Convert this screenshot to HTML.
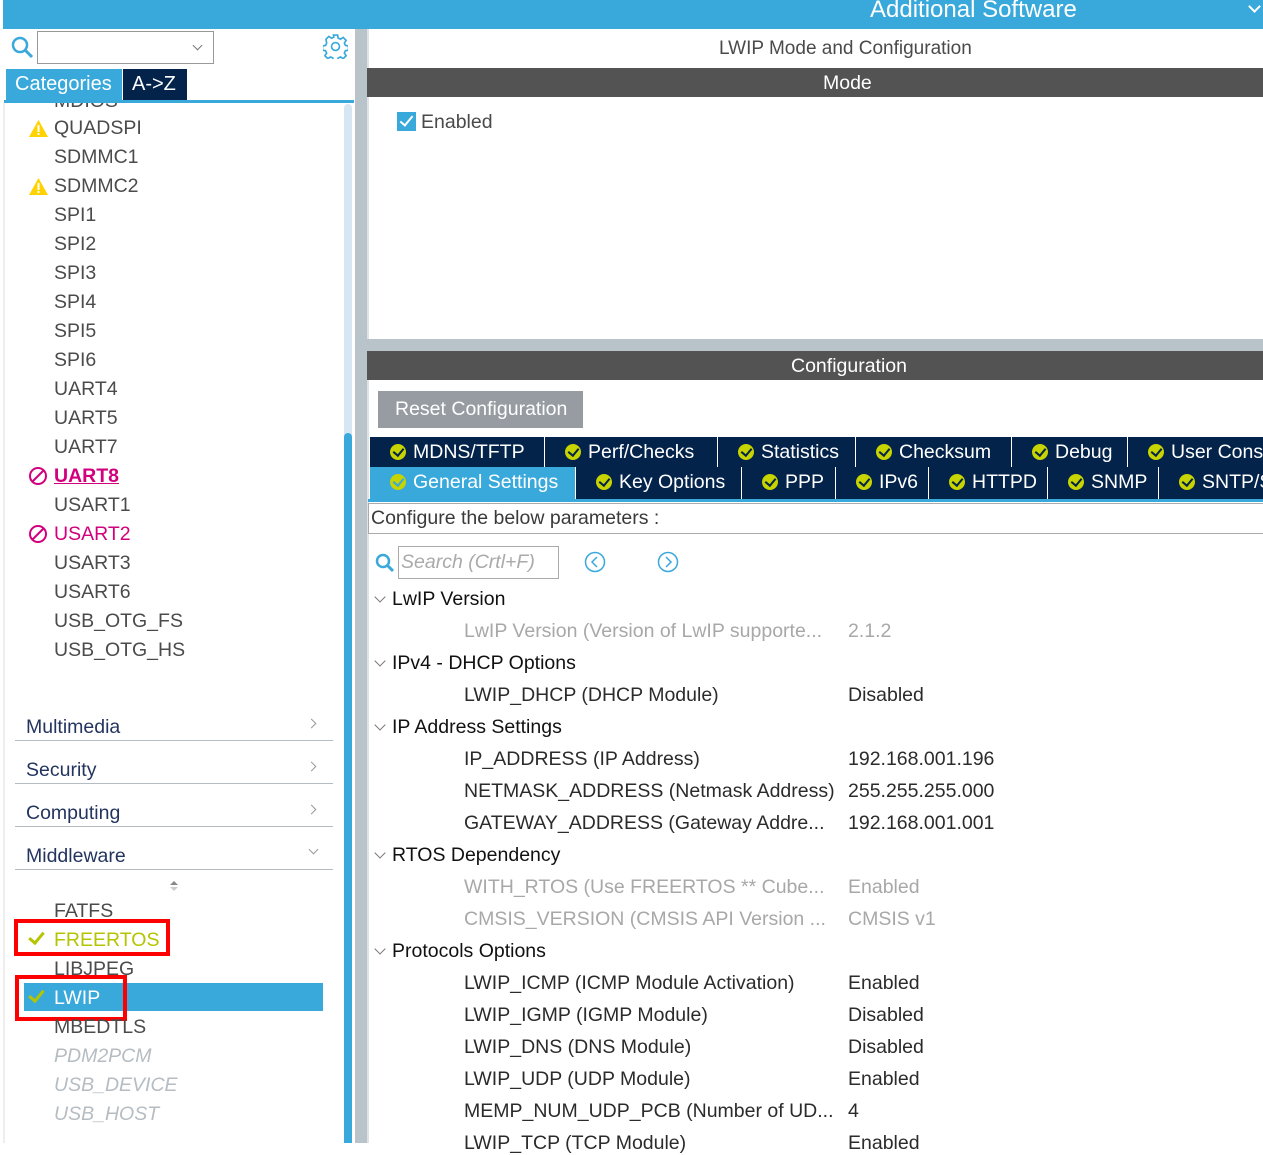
<!DOCTYPE html>
<html><head><meta charset="utf-8"><style>
*{margin:0;padding:0;box-sizing:border-box}
body{width:1263px;height:1143px;position:relative;overflow:hidden;background:#fff;font-family:"Liberation Sans",sans-serif;color:#4a4a4a}
.a{position:absolute}
.t{position:absolute;line-height:24px;font-size:19.5px;white-space:nowrap}
.li{color:#4b4b4b}
.dim{color:#b5bcc2;font-style:italic}
.mn{color:#23345f}
.ln{position:absolute;left:15px;width:318px;height:1px;background:#b5bcc2}
.tab{position:absolute;height:30px;background:#03234b;color:#fff;font-size:19.5px;line-height:30px;padding-left:20px;border-right:1px solid #fff;white-space:nowrap;overflow:hidden}
.tab i{display:inline-block;width:16px;height:16px;border-radius:50%;background:#c8d400;vertical-align:-2px;margin-right:7px;position:relative}
.tab i:after{content:"";position:absolute;left:5px;top:2px;width:5px;height:8px;border:solid #03234b;border-width:0 2px 2px 0;transform:rotate(40deg)}
.tab.on i:after{border-color:#39a9dc}
.h{color:#111}
.k{color:#2b2b2b}
.g{color:#a8a8a8}
.arr{position:absolute;left:376px;width:8px;height:8px;border:solid #777;border-width:0 1px 1px 0;transform:rotate(45deg)}
</style></head><body>
<div class="a" style="left:3px;top:0;width:1260px;height:29px;background:#39a9dc"></div>
<div class="t" style="left:870px;top:-3px;font-size:24px;color:#fff;line-height:26px">Additional Software</div>
<div class="a" style="left:1250px;top:2px;width:9px;height:9px;border:solid #fff;border-width:0 2px 2px 0;transform:rotate(45deg)"></div>

<svg class="a" style="left:10px;top:35px" width="24" height="24" viewBox="0 0 24 24"><circle cx="10" cy="10" r="7" fill="none" stroke="#39a9dc" stroke-width="2.5"/><line x1="15" y1="15" x2="22" y2="22" stroke="#39a9dc" stroke-width="3"/></svg>
<div class="a" style="left:37px;top:31px;width:177px;height:33px;border:1px solid #999"></div>
<div class="a" style="left:194px;top:42px;width:7px;height:7px;border:solid #777;border-width:0 1px 1px 0;transform:rotate(45deg)"></div>
<svg class="a" style="left:323px;top:34px" width="25" height="25" viewBox="0 0 24 24"><path d="M10 1h4l.6 3 2.2 1 2.6-1.7 2.8 2.8-1.7 2.6 1 2.2 3 .6v4l-3 .6-1 2.2 1.7 2.6-2.8 2.8-2.6-1.7-2.2 1-.6 3h-4l-.6-3-2.2-1-2.6 1.7-2.8-2.8 1.7-2.6-1-2.2-3-.6v-4l3-.6 1-2.2L2.8 5.1l2.8-2.8 2.6 1.7 2.2-1z" fill="none" stroke="#39a9dc" stroke-width="1.6"/><circle cx="12" cy="12" r="3.8" fill="none" stroke="#39a9dc" stroke-width="1.6"/></svg>
<div class="a" style="left:6px;top:69px;width:116px;height:31px;background:#39a9dc;color:#fff;font-size:20px;line-height:31px;padding-left:9px">Categories</div>
<div class="a" style="left:123px;top:69px;width:64px;height:31px;background:#03234b;color:#fff;font-size:20px;line-height:31px;padding-left:9px">A-&gt;Z</div>
<div class="a" style="left:4px;top:100px;width:350px;height:3px;background:#39a9dc"></div>
<div class="a" style="left:3px;top:103px;width:2px;height:1040px;background:#eee"></div>
<div class="a" style="left:344px;top:104px;width:8px;height:1039px;background:#d6e6f3;border-radius:4px 4px 0 0"></div>
<div class="a" style="left:344px;top:433px;width:8px;height:710px;background:#39a9dc;border-radius:4px 4px 0 0"></div>
<div class="a" style="left:355px;top:29px;width:12px;height:1114px;background:#b9c4ca"></div>

<div class="a" style="left:0;top:103px;width:340px;height:8px;overflow:hidden"><div class="t li" style="left:54px;top:-14px">MDIOS</div></div>
<svg class="a" style="left:28px;top:119px" width="21" height="19" viewBox="0 0 21 19"><path d="M10.5 1L20 18H1z" fill="#ffd200"/><rect x="9.5" y="6" width="2" height="7" fill="#fff"/><rect x="9.5" y="14" width="2" height="2" fill="#fff"/></svg>
<div class="t li" style="left:54px;top:116px">QUADSPI</div>
<div class="t li" style="left:54px;top:145px">SDMMC1</div>
<svg class="a" style="left:28px;top:177px" width="21" height="19" viewBox="0 0 21 19"><path d="M10.5 1L20 18H1z" fill="#ffd200"/><rect x="9.5" y="6" width="2" height="7" fill="#fff"/><rect x="9.5" y="14" width="2" height="2" fill="#fff"/></svg>
<div class="t li" style="left:54px;top:174px">SDMMC2</div>
<div class="t li" style="left:54px;top:203px">SPI1</div>
<div class="t li" style="left:54px;top:232px">SPI2</div>
<div class="t li" style="left:54px;top:261px">SPI3</div>
<div class="t li" style="left:54px;top:290px">SPI4</div>
<div class="t li" style="left:54px;top:319px">SPI5</div>
<div class="t li" style="left:54px;top:348px">SPI6</div>
<div class="t li" style="left:54px;top:377px">UART4</div>
<div class="t li" style="left:54px;top:406px">UART5</div>
<div class="t li" style="left:54px;top:435px">UART7</div>
<svg class="a" style="left:28px;top:466px" width="20" height="20" viewBox="0 0 20 20"><circle cx="10" cy="10" r="8" fill="none" stroke="#d2007c" stroke-width="2"/><line x1="4.5" y1="15.5" x2="15.5" y2="4.5" stroke="#d2007c" stroke-width="2"/></svg>
<div class="t" style="left:54px;top:464px;color:#d2007c;font-weight:bold;text-decoration:underline">UART8</div>
<div class="t li" style="left:54px;top:493px">USART1</div>
<svg class="a" style="left:28px;top:524px" width="20" height="20" viewBox="0 0 20 20"><circle cx="10" cy="10" r="8" fill="none" stroke="#d2007c" stroke-width="2"/><line x1="4.5" y1="15.5" x2="15.5" y2="4.5" stroke="#d2007c" stroke-width="2"/></svg>
<div class="t" style="left:54px;top:522px;color:#d2007c">USART2</div>
<div class="t li" style="left:54px;top:551px">USART3</div>
<div class="t li" style="left:54px;top:580px">USART6</div>
<div class="t li" style="left:54px;top:609px">USB_OTG_FS</div>
<div class="t li" style="left:54px;top:638px">USB_OTG_HS</div>

<div class="t mn" style="left:26px;top:715px">Multimedia</div><div class="ln" style="top:740px"></div>
<div class="t mn" style="left:26px;top:758px">Security</div><div class="ln" style="top:783px"></div>
<div class="t mn" style="left:26px;top:801px">Computing</div><div class="ln" style="top:826px"></div>
<div class="t mn" style="left:26px;top:844px">Middleware</div><div class="ln" style="top:869px"></div>
<div class="a" style="left:308px;top:720px;width:7px;height:7px;border:solid #999;border-width:1px 1px 0 0;transform:rotate(45deg)"></div>
<div class="a" style="left:308px;top:763px;width:7px;height:7px;border:solid #999;border-width:1px 1px 0 0;transform:rotate(45deg)"></div>
<div class="a" style="left:308px;top:806px;width:7px;height:7px;border:solid #999;border-width:1px 1px 0 0;transform:rotate(45deg)"></div>
<div class="a" style="left:310px;top:846px;width:7px;height:7px;border:solid #999;border-width:0 1px 1px 0;transform:rotate(45deg)"></div>
<div class="a" style="left:170px;top:881px;width:0;height:0;border:4px solid transparent;border-bottom:4px solid #888;border-top:0"></div>
<div class="a" style="left:170px;top:887px;width:0;height:0;border:4px solid transparent;border-top:4px solid #ccc;border-bottom:0"></div>

<div class="t li" style="left:54px;top:899px">FATFS</div>
<div class="a" style="left:14px;top:919px;width:156px;height:37px;border:4px solid #f00"></div>
<div class="a" style="left:32px;top:929px;width:9px;height:15px;border:solid #b5c400;border-width:0 3px 3px 0;transform:rotate(40deg)"></div>
<div class="t" style="left:54px;top:928px;color:#b5c400">FREERTOS</div>
<div class="t li" style="left:54px;top:957px">LIBJPEG</div>
<div class="a" style="left:24px;top:983px;width:299px;height:28px;background:#39a9dc"></div>
<div class="a" style="left:15px;top:975px;width:112px;height:46px;border:4px solid #f00"></div>
<div class="a" style="left:32px;top:987px;width:9px;height:15px;border:solid #b5c400;border-width:0 3px 3px 0;transform:rotate(40deg)"></div>
<div class="t" style="left:54px;top:986px;color:#fff">LWIP</div>
<div class="t li" style="left:54px;top:1015px">MBEDTLS</div>
<div class="t dim" style="left:54px;top:1044px">PDM2PCM</div>
<div class="t dim" style="left:54px;top:1073px">USB_DEVICE</div>
<div class="t dim" style="left:54px;top:1102px">USB_HOST</div>

<div class="a" style="left:367px;top:29px;width:2px;height:1114px;background:#dde3e6"></div>
<div class="t" style="left:719px;top:37px;font-size:19px;color:#4a4a4a">LWIP Mode and Configuration</div>
<div class="a" style="left:367px;top:68px;width:896px;height:29px;background:#525352"></div>
<div class="t" style="left:823px;top:71px;color:#fff">Mode</div>
<div class="a" style="left:397px;top:112px;width:19px;height:19px;background:#39a9dc"></div>
<div class="a" style="left:403px;top:113px;width:7px;height:13px;border:solid #fff;border-width:0 2px 2px 0;transform:rotate(40deg)"></div>
<div class="t" style="left:421px;top:110px">Enabled</div>
<div class="a" style="left:367px;top:339px;width:896px;height:12px;background:#b9c4ca"></div>
<div class="a" style="left:367px;top:351px;width:896px;height:29px;background:#525352"></div>
<div class="t" style="left:791px;top:354px;color:#fff">Configuration</div>
<div class="a" style="left:378px;top:391px;width:205px;height:37px;background:#969ca1;color:#fff;font-size:19.5px;line-height:37px;padding-left:17px">Reset Configuration</div>

<div class="tab" style="left:370px;top:437px;width:175px"><i></i>MDNS/TFTP</div>
<div class="tab" style="left:545px;top:437px;width:173px"><i></i>Perf/Checks</div>
<div class="tab" style="left:718px;top:437px;width:138px"><i></i>Statistics</div>
<div class="tab" style="left:856px;top:437px;width:156px"><i></i>Checksum</div>
<div class="tab" style="left:1012px;top:437px;width:116px"><i></i>Debug</div>
<div class="tab" style="left:1128px;top:437px;width:135px;border-right:0"><i></i>User Cons</div>
<div class="tab on" style="left:370px;top:467px;width:206px;background:#39a9dc;height:32px"><i></i>General Settings</div>
<div class="tab" style="left:576px;top:467px;width:166px;height:32px"><i></i>Key Options</div>
<div class="tab" style="left:742px;top:467px;width:94px;height:32px"><i></i>PPP</div>
<div class="tab" style="left:836px;top:467px;width:93px;height:32px"><i></i>IPv6</div>
<div class="tab" style="left:929px;top:467px;width:119px;height:32px"><i></i>HTTPD</div>
<div class="tab" style="left:1048px;top:467px;width:111px;height:32px"><i></i>SNMP</div>
<div class="tab" style="left:1159px;top:467px;width:104px;height:32px;border-right:0"><i></i>SNTP/SNTP</div>
<div class="a" style="left:368px;top:499px;width:895px;height:3px;background:#39a9dc"></div>
<div class="a" style="left:368px;top:503px;width:900px;height:31px;border:1px solid #aaa"></div>
<div class="t" style="left:371px;top:506px;color:#3a3a3a">Configure the below parameters :</div>

<svg class="a" style="left:375px;top:553px" width="20" height="20" viewBox="0 0 20 20"><circle cx="8" cy="8" r="6" fill="none" stroke="#39a9dc" stroke-width="2.5"/><line x1="12" y1="12" x2="18" y2="18" stroke="#39a9dc" stroke-width="3"/></svg>
<div class="a" style="left:398px;top:546px;width:161px;height:33px;border:1px solid #aaa"></div>
<div class="t" style="left:401px;top:550px;color:#aaa;font-style:italic">Search (Crtl+F)</div>
<svg class="a" style="left:584px;top:551px" width="22" height="22" viewBox="0 0 22 22"><circle cx="11" cy="11" r="9.5" fill="none" stroke="#39a9dc" stroke-width="1.5"/><path d="M13 6l-5 5 5 5" fill="none" stroke="#39a9dc" stroke-width="1.5"/></svg>
<svg class="a" style="left:657px;top:551px" width="22" height="22" viewBox="0 0 22 22"><circle cx="11" cy="11" r="9.5" fill="none" stroke="#39a9dc" stroke-width="1.5"/><path d="M9 6l5 5-5 5" fill="none" stroke="#39a9dc" stroke-width="1.5"/></svg>

<div class="arr" style="top:593px"></div><div class="t h" style="left:392px;top:587px">LwIP Version</div>
<div class="t g" style="left:464px;top:619px">LwIP Version (Version of LwIP supporte...</div><div class="t g" style="left:848px;top:619px">2.1.2</div>
<div class="arr" style="top:657px"></div><div class="t h" style="left:392px;top:651px">IPv4 - DHCP Options</div>
<div class="t k" style="left:464px;top:683px">LWIP_DHCP (DHCP Module)</div><div class="t k" style="left:848px;top:683px">Disabled</div>
<div class="arr" style="top:721px"></div><div class="t h" style="left:392px;top:715px">IP Address Settings</div>
<div class="t k" style="left:464px;top:747px">IP_ADDRESS (IP Address)</div><div class="t k" style="left:848px;top:747px">192.168.001.196</div>
<div class="t k" style="left:464px;top:779px">NETMASK_ADDRESS (Netmask Address)</div><div class="t k" style="left:848px;top:779px">255.255.255.000</div>
<div class="t k" style="left:464px;top:811px">GATEWAY_ADDRESS (Gateway Addre...</div><div class="t k" style="left:848px;top:811px">192.168.001.001</div>
<div class="arr" style="top:849px"></div><div class="t h" style="left:392px;top:843px">RTOS Dependency</div>
<div class="t g" style="left:464px;top:875px">WITH_RTOS (Use FREERTOS ** Cube...</div><div class="t g" style="left:848px;top:875px">Enabled</div>
<div class="t g" style="left:464px;top:907px">CMSIS_VERSION (CMSIS API Version ...</div><div class="t g" style="left:848px;top:907px">CMSIS v1</div>
<div class="arr" style="top:945px"></div><div class="t h" style="left:392px;top:939px">Protocols Options</div>
<div class="t k" style="left:464px;top:971px">LWIP_ICMP (ICMP Module Activation)</div><div class="t k" style="left:848px;top:971px">Enabled</div>
<div class="t k" style="left:464px;top:1003px">LWIP_IGMP (IGMP Module)</div><div class="t k" style="left:848px;top:1003px">Disabled</div>
<div class="t k" style="left:464px;top:1035px">LWIP_DNS (DNS Module)</div><div class="t k" style="left:848px;top:1035px">Disabled</div>
<div class="t k" style="left:464px;top:1067px">LWIP_UDP (UDP Module)</div><div class="t k" style="left:848px;top:1067px">Enabled</div>
<div class="t k" style="left:464px;top:1099px">MEMP_NUM_UDP_PCB (Number of UD...</div><div class="t k" style="left:848px;top:1099px">4</div>
<div class="t k" style="left:464px;top:1131px">LWIP_TCP (TCP Module)</div><div class="t k" style="left:848px;top:1131px">Enabled</div>
</body></html>
